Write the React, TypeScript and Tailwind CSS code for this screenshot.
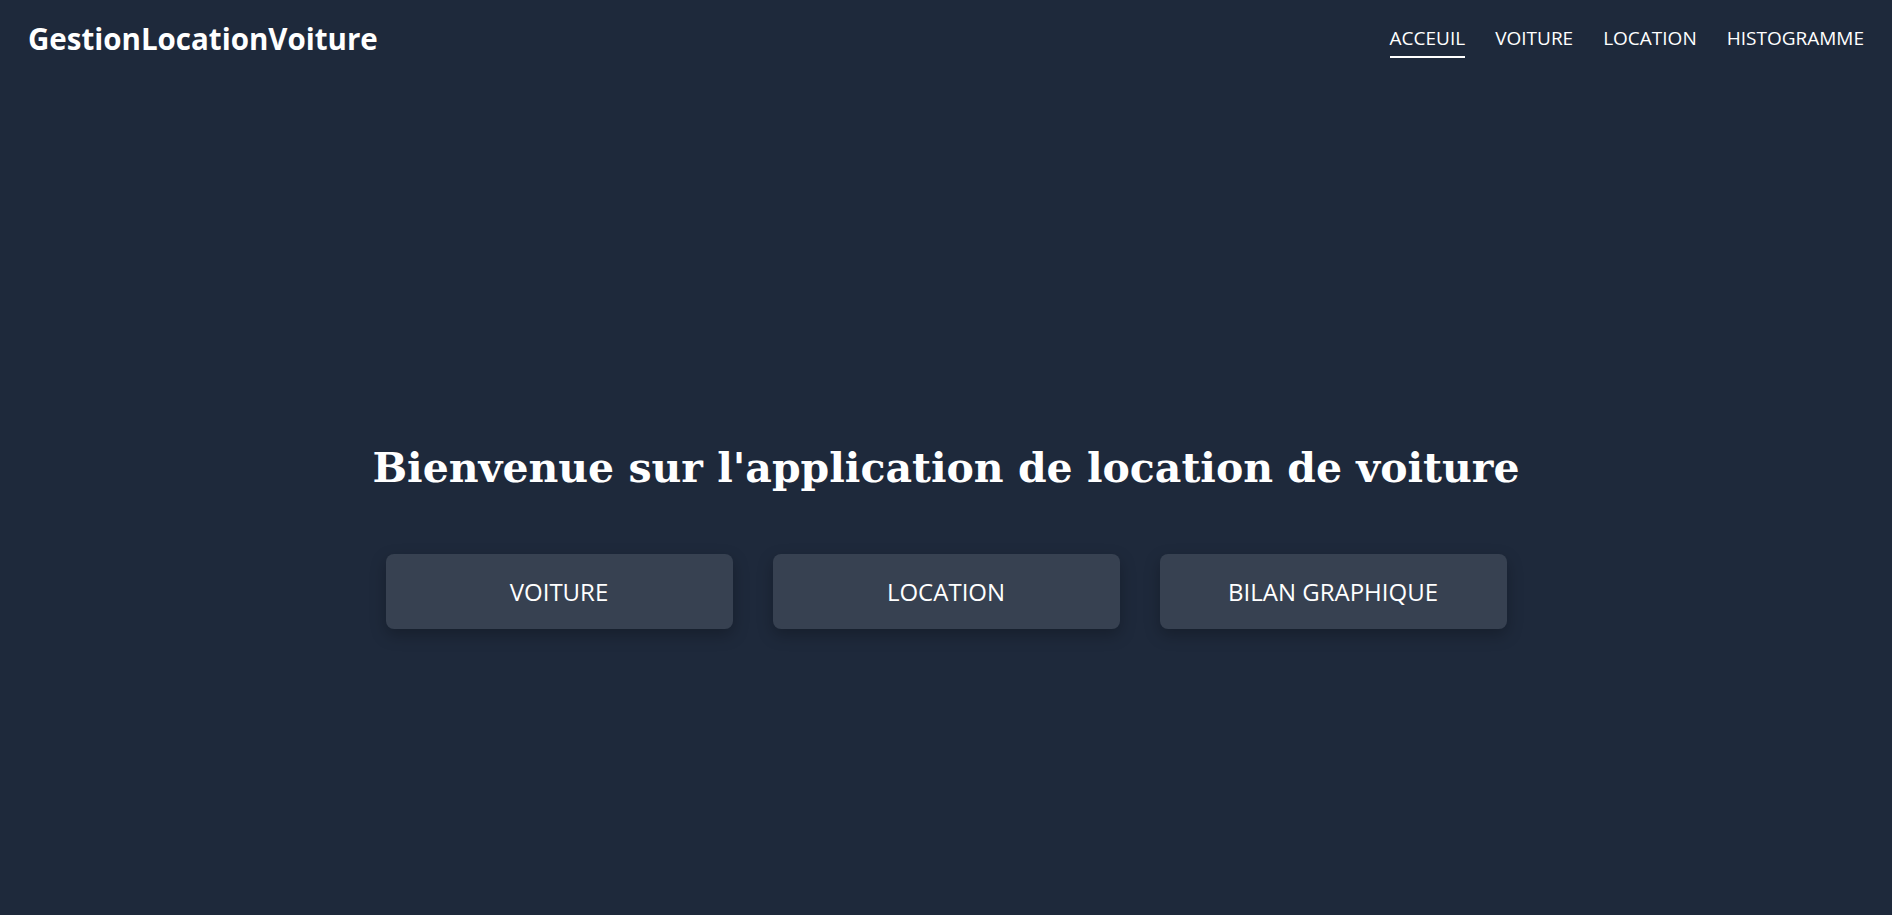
import React from "react";

const sans = { fontFamily: '"Open Sans", "Noto Sans", sans-serif' };

export default function App() {
  return (
    <div className="min-h-screen w-full bg-[#1e293b] text-white" style={sans}>
      <header className="flex h-[78px] items-center justify-between px-[28px]">
        <div className="text-[29.5px] font-bold leading-none">GestionLocationVoiture</div>
        <nav className="-mt-[2px] flex items-center gap-[30px] text-[19px] leading-none">
          <a className="relative cursor-pointer">
            ACCEUIL
            <span className="absolute left-0 right-0 -bottom-[10px] h-[2px] bg-white" />
          </a>
          <a className="cursor-pointer">VOITURE</a>
          <a className="cursor-pointer">LOCATION</a>
          <a className="cursor-pointer">HISTOGRAMME</a>
        </nav>
      </header>
      <main className="flex flex-col items-center pt-[370px]">
        <h1
          className="text-[41px] font-bold leading-none"
          style={{ fontFamily: '"DejaVu Serif", "Liberation Serif", serif' }}
        >
          Bienvenue sur l'application de location de voiture
        </h1>
        <div className="mt-[65px] flex gap-[40px]">
          {["VOITURE", "LOCATION", "BILAN GRAPHIQUE"].map((t) => (
            <button
              key={t}
              className="flex h-[75px] w-[347px] items-center justify-center rounded-lg bg-[#374151] text-[24px] text-white shadow-[0_6px_16px_rgba(0,0,0,0.25)]"
            >
              {t}
            </button>
          ))}
        </div>
      </main>
    </div>
  );
}
